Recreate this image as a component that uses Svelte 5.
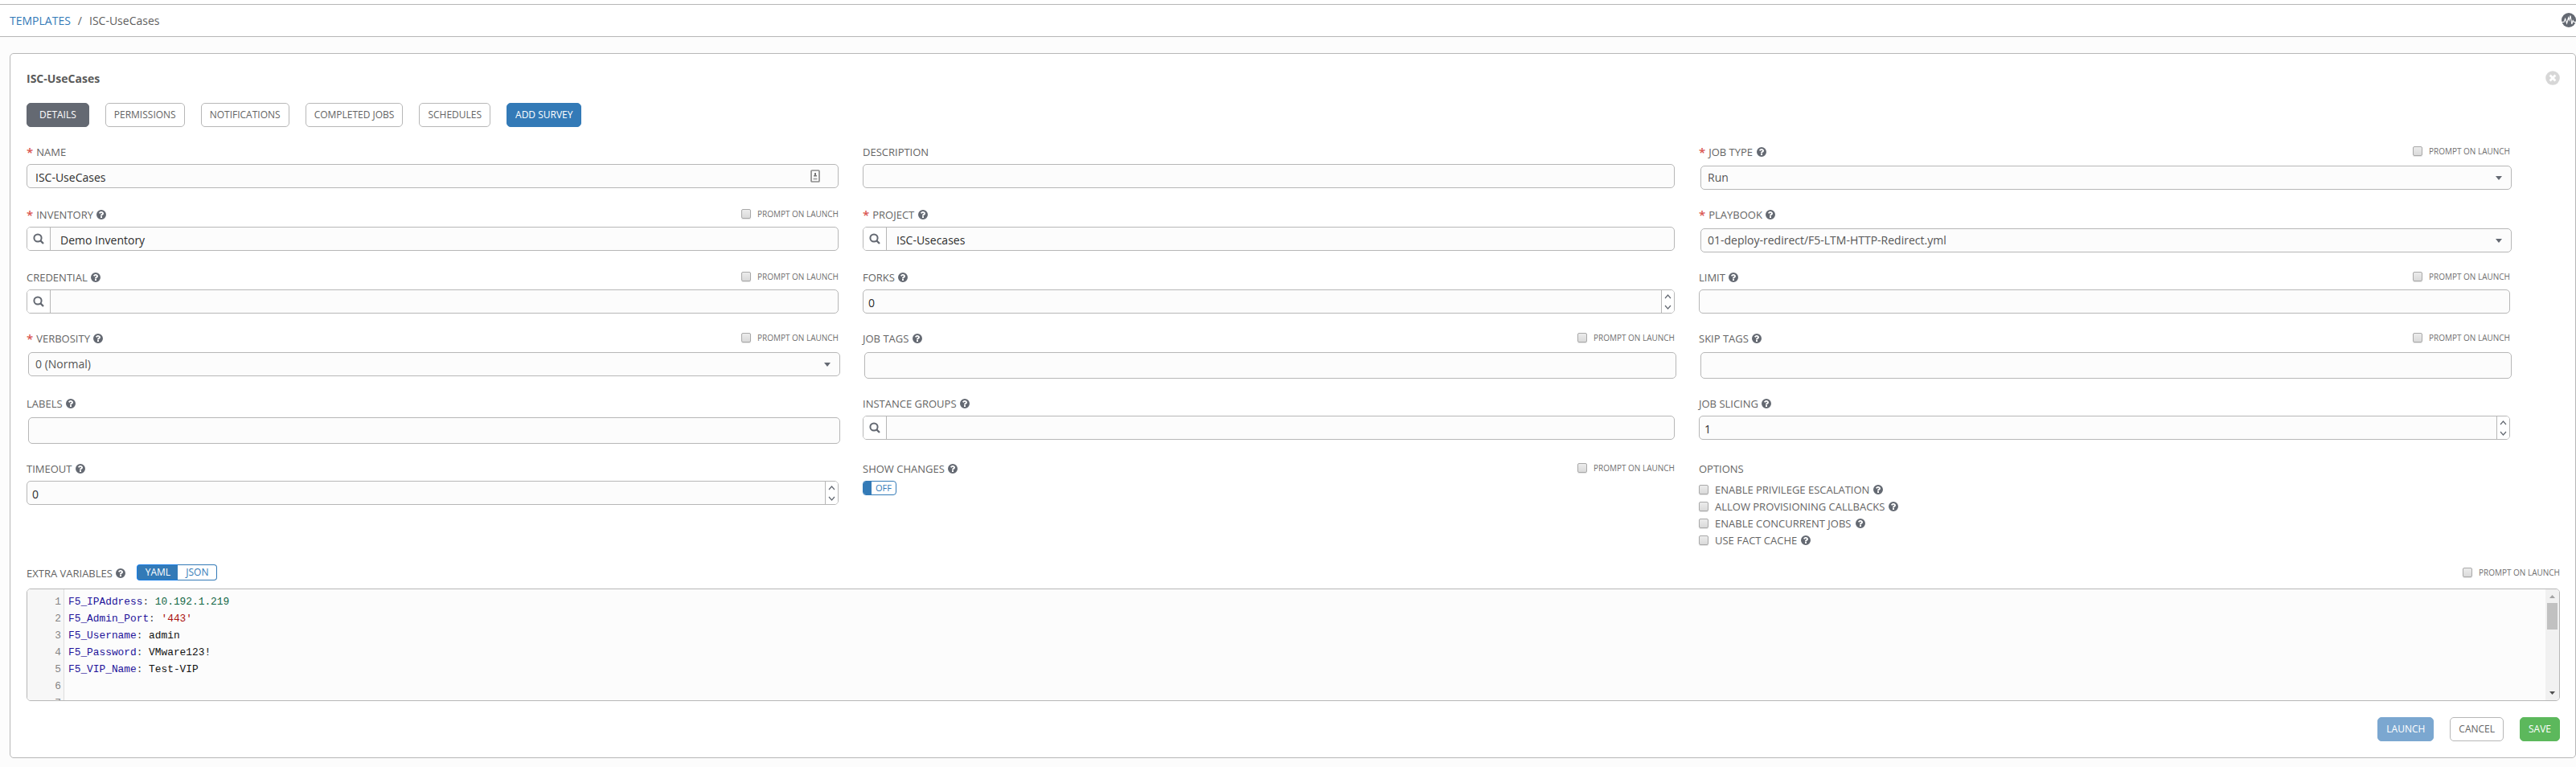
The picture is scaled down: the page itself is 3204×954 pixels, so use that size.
<script>
  const rows = [
    [
      { label: 'NAME', req: true, type: 'text', value: 'ISC-UseCases', card: true },
      { label: 'DESCRIPTION', type: 'text', value: '' },
      { label: 'JOB TYPE', req: true, help: true, prompt: true, type: 'select', value: 'Run' }
    ],
    [
      { label: 'INVENTORY', req: true, help: true, prompt: true, type: 'lookup', value: 'Demo Inventory' },
      { label: 'PROJECT', req: true, help: true, type: 'lookup', value: 'ISC-Usecases' },
      { label: 'PLAYBOOK', req: true, help: true, type: 'select', value: '01-deploy-redirect/F5-LTM-HTTP-Redirect.yml' }
    ],
    [
      { label: 'CREDENTIAL', help: true, prompt: true, type: 'lookup', value: '' },
      { label: 'FORKS', help: true, type: 'number', value: '0' },
      { label: 'LIMIT', help: true, prompt: true, type: 'text', value: '' }
    ],
    [
      { label: 'VERBOSITY', req: true, help: true, prompt: true, type: 'select', value: '0 (Normal)' },
      { label: 'JOB TAGS', help: true, prompt: true, type: 'tags' },
      { label: 'SKIP TAGS', help: true, prompt: true, type: 'tags' }
    ],
    [
      { label: 'LABELS', help: true, type: 'tags' },
      { label: 'INSTANCE GROUPS', help: true, type: 'lookup', value: '' },
      { label: 'JOB SLICING', help: true, type: 'number', value: '1' }
    ],
    [
      { label: 'TIMEOUT', help: true, type: 'number', value: '0' },
      { label: 'SHOW CHANGES', help: true, prompt: true, type: 'toggle' },
      { label: 'OPTIONS', type: 'options' }
    ]
  ];
  const fields = rows.flat();
  const options = ['ENABLE PRIVILEGE ESCALATION', 'ALLOW PROVISIONING CALLBACKS', 'ENABLE CONCURRENT JOBS', 'USE FACT CACHE'];
  const tabs = ['PERMISSIONS', 'NOTIFICATIONS', 'COMPLETED JOBS', 'SCHEDULES'];
  const code = [
    ['F5_IPAddress', '10.192.1.219', 'num'],
    ['F5_Admin_Port', "'443'", 'str'],
    ['F5_Username', 'admin', ''],
    ['F5_Password', 'VMware123!', ''],
    ['F5_VIP_Name', 'Test-VIP', ''],
    null,
    null
  ];
</script>

{#snippet help()}
  <svg class="help" viewBox="0 0 1536 1536" width="12" height="12"><path fill="#646972" d="M768 0a768 768 0 1 0 0 1536a768 768 0 1 0 0-1536zM896 1248a32 32 0 0 1-32 32H672a32 32 0 0 1-32-32v-192a32 32 0 0 1 32-32h192a32 32 0 0 1 32 32zM1152 576c0 152-103 210-179 252-49 28-77 82-77 100a32 32 0 0 1-32 32H672c-21 0-32-23-32-46v-36c0-97 96-181 166-213 61-28 87-55 87-106 0-46-60-87-127-87-37 0-70 12-89 25-22 15-43 37-92 100a31 31 0 0 1-44 6L410 503a32 32 0 0 1-7-43c87-143 208-209 376-209 176 0 373 138 373 325z"/></svg>
{/snippet}

{#snippet prompt()}
  <span class="prompt"><i class="check"></i>PROMPT ON LAUNCH</span>
{/snippet}

<header class="crumbs">
  <div class="trail"><a href="#templates">TEMPLATES</a><span class="slash">/</span><span>ISC-UseCases</span></div>
  <svg class="activity" viewBox="0 0 18 18" width="18" height="18"><circle cx="9" cy="9" r="9" fill="#646972"/><path d="M0 11.5h3l1.6-4.2 2 5.7L8.6 6l.9 3L11 3.5l1.8 10.5 1.4-4.5 1.2 2H18" fill="none" stroke="#fff" stroke-width="1.1"/></svg>
</header>

<main class="panel">
  <div class="heading">
    <h1>ISC-UseCases</h1>
    <svg viewBox="0 0 18 18" width="18" height="18"><circle cx="9" cy="9" r="8.8" fill="#d7d7d7"/><path d="M5.6 5.6l6.8 6.8M12.4 5.6l-6.8 6.8" stroke="#fff" stroke-width="2.8"/></svg>
  </div>
  <nav class="tabs">
    <button class="btn active">DETAILS</button>
    {#each tabs as t}<button class="btn">{t}</button>{/each}
    <button class="btn primary">ADD SURVEY</button>
  </nav>

  <section class="grid">
    {#each fields as f}
      <div class="field">
        <div class="label">
          <span class="name">{#if f.req}<b>*</b>{/if}{f.label}{#if f.help}{@render help()}{/if}</span>
          {#if f.prompt}{@render prompt()}{/if}
        </div>
        {#if f.type === 'text'}
          <div class="box text"><span>{f.value}</span>
            {#if f.card}<svg width="12" height="16" viewBox="0 0 12 16"><rect x="1" y="1" width="10" height="14" rx="1" fill="#fff" stroke="#8c8c8c" stroke-width="1.7"/><path d="M5 4h2v3H5zM4 7h4v1.5H4z" fill="#777"/><path d="M3.5 10.5h5v2h-5z" fill="#aaa"/></svg>{/if}
          </div>
        {:else if f.type === 'select'}
          <div class="box select"><span>{f.value}</span><svg width="8" height="5" viewBox="0 0 8 5"><path d="M0 0h8L4 5z" fill="#646972"/></svg></div>
        {:else if f.type === 'lookup'}
          <div class="box lookup">
            <div class="find"><svg width="14" height="14" viewBox="0 0 14 14" fill="none" stroke="#646972"><circle cx="6" cy="6" r="4.6" stroke-width="2"/><path d="M9.4 9.4l3.6 3.6" stroke-width="2.3"/></svg></div>
            <span>{f.value}</span>
          </div>
        {:else if f.type === 'number'}
          <div class="box number"><span>{f.value}</span>
            <div class="spin"><svg width="15" height="28" viewBox="0 0 15 28" fill="none" stroke="#646972" stroke-width="1.2"><path d="M4 10l3.5-4L11 10M4 19l3.5 4L11 19"/></svg></div>
          </div>
        {:else if f.type === 'tags'}
          <div class="box tags"></div>
        {:else if f.type === 'toggle'}
          <div class="toggle"><i></i><span>OFF</span></div>
        {:else}
          <div class="options">
            {#each options as o}<div class="option"><i class="check"></i><span>{o}</span>{@render help()}</div>{/each}
          </div>
        {/if}
      </div>
    {/each}
  </section>

  <div class="vars">
    <span class="name">EXTRA VARIABLES{@render help()}</span>
    <div class="modes"><span class="on">YAML</span><span class="off">JSON</span></div>
    {@render prompt()}
  </div>

  <div class="editor">
    <div class="lines">
      {#each code as l, i}
        <div class="line"><span class="no">{i + 1}</span><code>{#if l}<span class="key">{l[0]}</span><span class="colon">:</span> <span class={l[2]}>{l[1]}</span>{/if}</code></div>
      {/each}
    </div>
    <div class="scroll">
      <svg width="7" height="4" viewBox="0 0 7 4"><path d="M0 4L3.5 0 7 4z" fill="#a3a3a3"/></svg>
      <i></i>
      <svg width="7" height="4" viewBox="0 0 7 4"><path d="M0 0h7L3.5 4z" fill="#505050"/></svg>
    </div>
  </div>

  <footer>
    <button class="btn launch">LAUNCH</button>
    <button class="btn cancel">CANCEL</button>
    <button class="btn save">SAVE</button>
  </footer>
</main>

<style>
  :global(body) { background: #fcfcfc; overflow: hidden; }
  :global(#app) { height: 954px; overflow: hidden; font-family: "Open Sans", sans-serif; color: #646972; background: #fcfcfc; }
  :global(#app *) { box-sizing: border-box; }
  .crumbs { height: 46px; border-bottom: 1px solid #b7b7b7; background: linear-gradient(#b7b7b7, #b7b7b7) 0 5px / 100% 1px no-repeat #fff; padding: 6px 0 0 12px; display: flex; align-items: center; justify-content: space-between; font-size: 14px; color: #5e5e5e; }
  .trail { display: flex; }
  .trail a { color: #337ab7; text-decoration: none; }
  .slash { margin: 0 9px; }
  .activity { margin-top: -1px; flex: none; }
  .panel { width: 3192px; height: 877px; margin: 20px 0 0 12px; border: 1px solid #b7b7b7; border-radius: 5px; background: #fff; padding: 20px 19px 0 20px; }
  .heading { height: 20px; display: flex; justify-content: space-between; align-items: center; }
  .heading h1 { font-size: 14px; line-height: 20px; font-weight: 700; margin: 1px 0 0; color: #5a5a5a; }
  .tabs { display: flex; gap: 20px; margin-top: 21px; }
  .btn { height: 30px; border: 1px solid #b7b7b7; border-radius: 5px; background: #fff; color: #646464; font: 12px/1 "Open Sans", sans-serif; padding: 0 10px; white-space: nowrap; }
  .active { background: #646972; border-color: #646972; color: #fff; padding: 0 15px; }
  .primary { background: #337ab7; border-color: #337ab7; color: #fff; }
  .grid { display: grid; grid-template-columns: 1010px 1010px 1009px; column-gap: 30px; grid-template-rows: 78px 78px 76px 81px 81px 128px; margin-top: 22px; }
  .field { min-width: 0; }
  .label { height: 18px; margin-bottom: 6px; display: flex; justify-content: space-between; align-items: flex-start; font-size: 13px; line-height: 18px; color: #646464; }
  .name { display: flex; align-items: flex-start; white-space: nowrap; }
  .name b { color: #d9534f; font-size: 15px; font-weight: 600; margin-right: 4px; line-height: 18px; }
  .help { margin: 3px 0 0 5px; flex: none; }
  .name .help { margin-left: 4.5px; }
  .prompt { display: flex; align-items: center; font-size: 10px; line-height: 14px; height: 14px; color: #707070; margin-top: 1px; white-space: nowrap; }
  .check { display: block; width: 12px; height: 12px; flex: none; border: 1px solid #a9a9a9; border-radius: 2px; background: linear-gradient(#ececec, #dadada); box-shadow: 0 1px 1px #e4e4e4; }
  .prompt .check { margin-right: 8px; }
  .box { height: 30px; border: 1px solid #b7b7b7; border-radius: 5px; background: #fcfcfc; display: flex; align-items: center; justify-content: space-between; font-size: 14px; line-height: 20px; color: #2c2c2c; overflow: hidden; }
  .text { padding: 3px 22px 0 10px; }
  .text svg { margin-top: -4px; }
  .select { margin: 8px -2px 0 2px; padding: 0 11px 0 8px; color: #555; }
  .tags { height: 33px; margin: 8px -2px 0 2px; }
  .lookup { justify-content: flex-start; }
  .lookup > span { padding: 3px 0 0 12px; }
  .find { width: 29px; height: 28px; border-right: 1px solid #b7b7b7; background: #fff; display: flex; align-items: center; justify-content: center; }
  .number { padding-left: 6px; }
  .number > span { padding-top: 3px; }
  .spin { width: 16px; height: 28px; border-left: 1px solid #b7b7b7; background: #fff; }
  .spin svg { display: block; }
  .toggle { width: 42px; height: 18px; border: 1px solid #337ab7; border-radius: 4px; display: flex; background: #fff; overflow: hidden; color: #337ab7; font-size: 11px; line-height: 16px; }
  .toggle i { width: 10px; background: #337ab7; }
  .toggle span { flex: 1; text-align: center; }
  .options { padding-top: 2px; }
  .option { display: flex; height: 21px; font-size: 13px; line-height: 18px; color: #646464; }
  .option .check { margin: 3px 8px 0 0; }
  .vars { height: 30px; display: flex; align-items: flex-start; font-size: 13px; line-height: 18px; color: #646464; padding-top: 6px; }
  .vars .name { margin-top: -4px; }
  .modes { display: flex; width: 100px; height: 20px; margin: -6px auto 0 14px; font-size: 12px; line-height: 17px; color: #337ab7; }
  .modes span { text-align: center; border: 1px solid #337ab7; }
  .modes .on { width: 51px; background: #337ab7; color: #fff; border-color: #1a7fe8; border-right: 0; border-radius: 4px 0 0 4px; }
  .modes .off { width: 49px; background: #fff; border-left: 0; border-radius: 0 4px 4px 0; }
  .vars .prompt { margin-top: -3px; }
  .editor { height: 140px; border: 1px solid #b7b7b7; border-radius: 5px; overflow: hidden; display: flex; background: #fcfcfc; }
  .lines { flex: 1; height: 138px; padding-top: 5px; background: linear-gradient(90deg, #f7f7f7 45px, #ddd 45px, #ddd 46px, #fcfcfc 46px); overflow: hidden; }
  .line { display: flex; height: 21px; line-height: 21px; font-family: "Liberation Mono", monospace; font-size: 12.83px; color: #111; }
  .no { width: 42px; text-align: right; color: #848484; }
  code { font: inherit; padding-left: 9px; white-space: pre; }
  .key { color: #219; }
  .colon { color: #555; }
  .num { color: #164; }
  .str { color: #a11; }
  .scroll { width: 17px; background: #f1f1f1; display: flex; flex-direction: column; align-items: center; padding: 7px 0; }
  .scroll i { width: 13px; height: 33px; margin: 6px 0 auto; background: #c1c1c1; }
  footer { display: flex; justify-content: flex-end; gap: 20px; margin-top: 20px; }
  .launch { background: #7ba7d0; border-color: #7ba7d0; color: #fff; }
  .save { background: #5cb85c; border-color: #5cb85c; color: #fff; }
</style>
